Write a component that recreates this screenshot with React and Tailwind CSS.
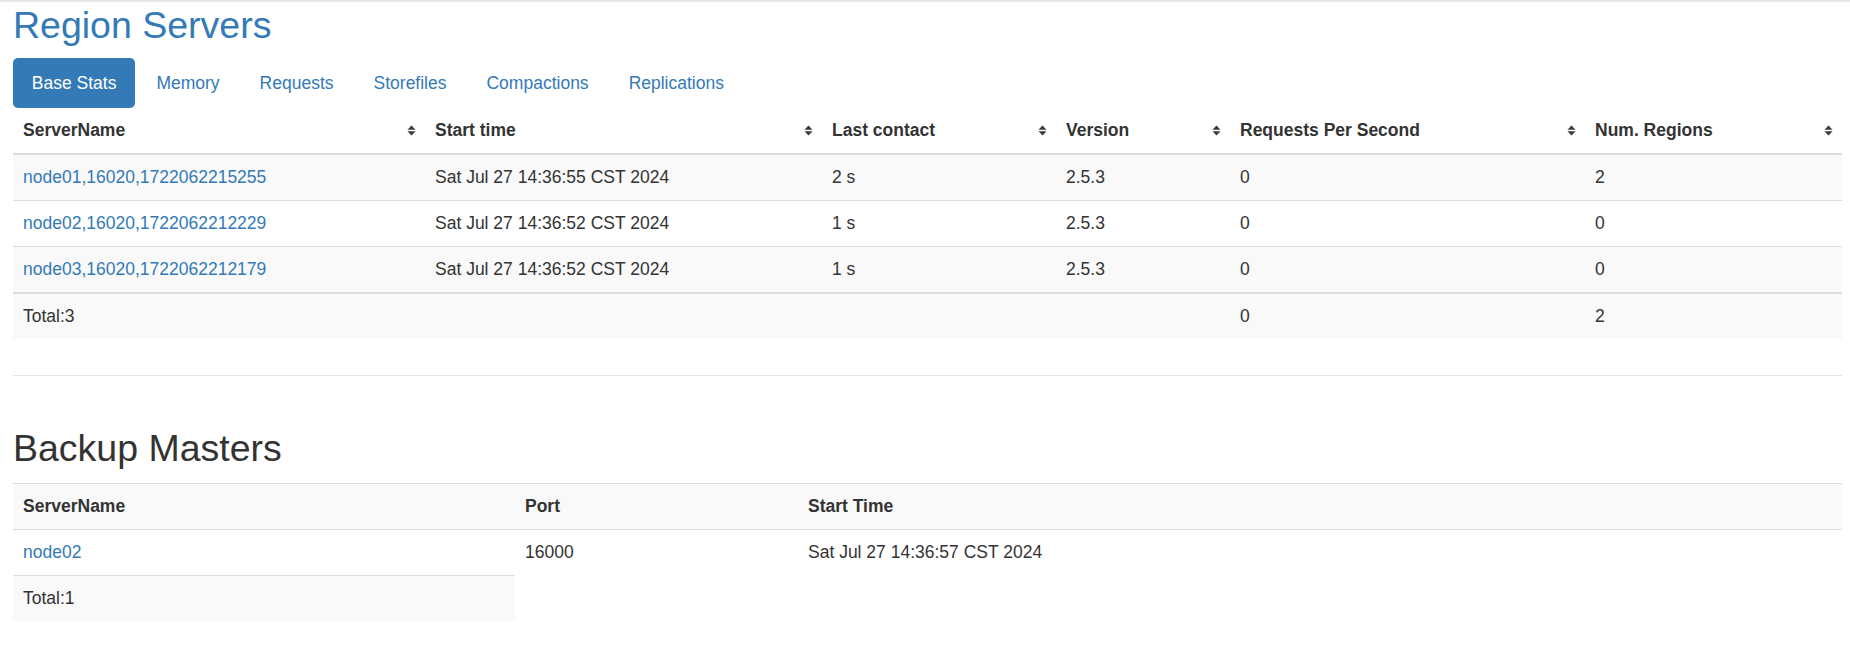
import React from 'react';

const tabs = ['Base Stats', 'Memory', 'Requests', 'Storefiles', 'Compactions', 'Replications'];

const columns = [
  { label: 'ServerName', col: 'w-[412px]' },
  { label: 'Start time', col: 'w-[397px]' },
  { label: 'Last contact', col: 'w-[234px]' },
  { label: 'Version', col: 'w-[174px]' },
  { label: 'Requests Per Second', col: 'w-[355px]' },
  { label: 'Num. Regions', col: 'w-[257px]' },
];

const servers = [
  { name: 'node01,16020,1722062215255', start: 'Sat Jul 27 14:36:55 CST 2024', contact: '2 s', version: '2.5.3', rps: '0', regions: '2' },
  { name: 'node02,16020,1722062212229', start: 'Sat Jul 27 14:36:52 CST 2024', contact: '1 s', version: '2.5.3', rps: '0', regions: '0' },
  { name: 'node03,16020,1722062212179', start: 'Sat Jul 27 14:36:52 CST 2024', contact: '1 s', version: '2.5.3', rps: '0', regions: '0' },
];

const SortIcon = () => (
  <svg width="9" height="11" viewBox="0 0 9 11" className="shrink-0">
    <path d="M0.5 4.7 L4.5 0.6 L8.5 4.7 Z" fill="#3a3a3a" />
    <path d="M0.5 6.3 L4.5 10.4 L8.5 6.3 Z" fill="#3a3a3a" />
  </svg>
);

const cell = 'px-[10px] py-[10px] leading-[25px] text-left align-top';

const App = () => {
  return (
    <div className="min-h-screen bg-white text-[17.5px] text-[#333] font-['Liberation_Sans',Arial,sans-serif]">
      <div className="h-[3px] bg-linear-to-b from-[#dedede] to-white" />

      <div className="pl-[13px] pr-[8px]">
        <h2 className="mt-[2px] mb-[12px] text-[37.5px] leading-[41px] font-normal text-[#337ab7]">
          Region Servers
        </h2>

        <ul className="flex">
          {tabs.map((tab, i) => (
            <li key={tab} className={i === 0 ? '' : 'ml-[2.5px]'}>
              <a
                href="#"
                className={
                  i === 0
                    ? 'block px-[18.75px] py-[12.5px] leading-[25px] rounded-[5px] bg-[#337ab7] text-white'
                    : 'block px-[18.75px] py-[12.5px] leading-[25px] rounded-[5px] text-[#337ab7]'
                }
              >
                {tab}
              </a>
            </li>
          ))}
        </ul>

        <table className="w-full table-fixed border-collapse">
          <colgroup>
            {columns.map((c) => (
              <col key={c.label} className={c.col} />
            ))}
          </colgroup>
          <thead>
            <tr>
              {columns.map((c) => (
                <th key={c.label} className="pl-[10px] pr-[9px] py-[10px] leading-[25px] text-left font-bold border-b-2 border-[#ddd]">
                  <div className="flex items-center justify-between">
                    <span>{c.label}</span>
                    <SortIcon />
                  </div>
                </th>
              ))}
            </tr>
          </thead>
          <tbody>
            {servers.map((s, i) => (
              <tr key={s.name} className={i % 2 === 0 ? 'bg-[#f9f9f9]' : 'bg-white'}>
                <td className={`${cell} border-t border-[#ddd]`}>
                  <a href="#" className="text-[#337ab7]">{s.name}</a>
                </td>
                <td className={`${cell} border-t border-[#ddd]`}>{s.start}</td>
                <td className={`${cell} border-t border-[#ddd]`}>{s.contact}</td>
                <td className={`${cell} border-t border-[#ddd]`}>{s.version}</td>
                <td className={`${cell} border-t border-[#ddd]`}>{s.rps}</td>
                <td className={`${cell} border-t border-[#ddd]`}>{s.regions}</td>
              </tr>
            ))}
          </tbody>
          <tbody>
            <tr className="bg-[#f9f9f9]">
              <td className={`${cell} border-t-2 border-[#ddd]`}>Total:3</td>
              <td className={`${cell} border-t-2 border-[#ddd]`}></td>
              <td className={`${cell} border-t-2 border-[#ddd]`}></td>
              <td className={`${cell} border-t-2 border-[#ddd]`}></td>
              <td className={`${cell} border-t-2 border-[#ddd]`}>0</td>
              <td className={`${cell} border-t-2 border-[#ddd]`}>2</td>
            </tr>
          </tbody>
        </table>

        <hr className="mt-[36px] border-0 border-t border-[#e5e5e5]" />

        <h2 className="mt-[52px] mb-[14px] text-[37.5px] leading-[41px] font-normal text-[#333]">
          Backup Masters
        </h2>

        <table className="w-full table-fixed border-collapse">
          <colgroup>
            <col className="w-[502px]" />
            <col className="w-[283px]" />
            <col />
          </colgroup>
          <tbody>
            <tr className="bg-[#f9f9f9]">
              <th className={`${cell} font-bold border-t border-[#ddd]`}>ServerName</th>
              <th className={`${cell} font-bold border-t border-[#ddd]`}>Port</th>
              <th className={`${cell} font-bold border-t border-[#ddd]`}>Start Time</th>
            </tr>
            <tr className="bg-white">
              <td className={`${cell} border-t border-[#ddd]`}>
                <a href="#" className="text-[#337ab7]">node02</a>
              </td>
              <td className={`${cell} border-t border-[#ddd]`}>16000</td>
              <td className={`${cell} border-t border-[#ddd]`}>Sat Jul 27 14:36:57 CST 2024</td>
            </tr>
            <tr>
              <td className={`${cell} border-t border-[#ddd] bg-[#f9f9f9]`}>Total:1</td>
            </tr>
          </tbody>
        </table>
      </div>
    </div>
  );
};

export default App;
